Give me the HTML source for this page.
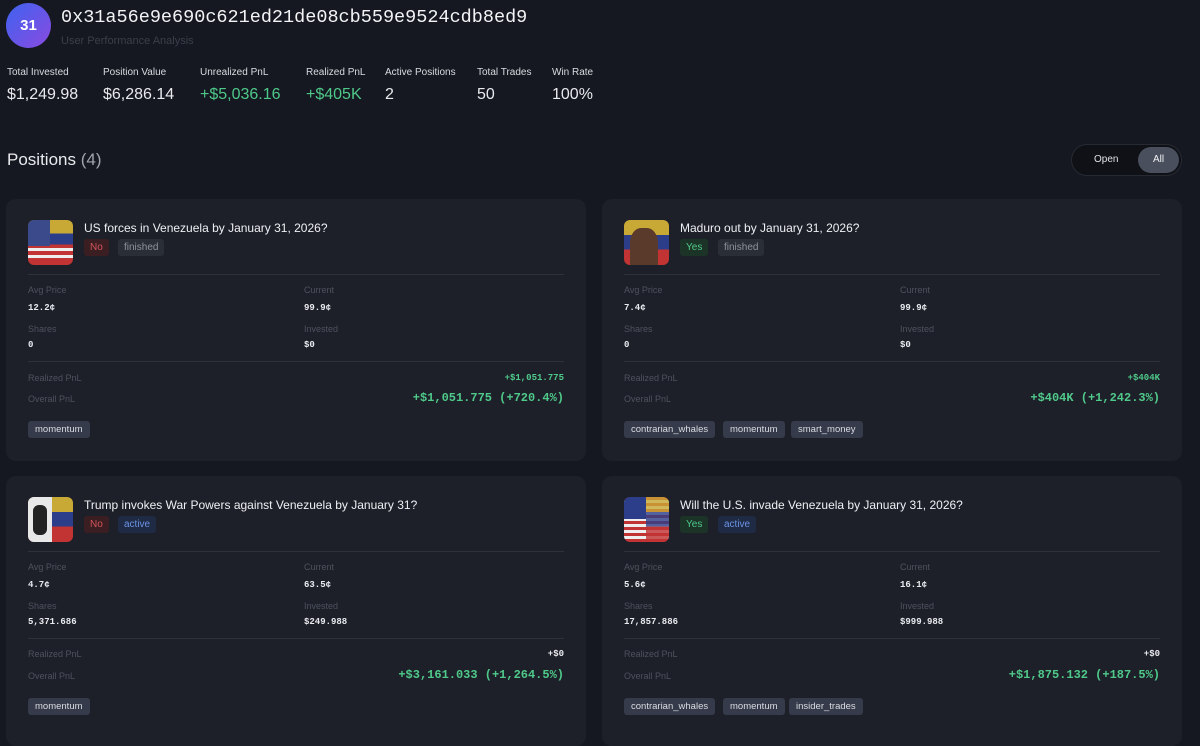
<!DOCTYPE html>
<html><head><style>
*{box-sizing:border-box;margin:0;padding:0}
body{width:1200px;height:733px;overflow:hidden;background:#151820;font-family:"Liberation Sans",sans-serif;color:#e8eaee;position:relative}
.mono{font-family:"Liberation Mono",monospace}
.abs{position:absolute}
.av{left:6px;top:3px;width:45px;height:45px;border-radius:50%;background:linear-gradient(135deg,#3e63f0,#8a4ae0);color:#fff;font-weight:bold;font-size:15px;display:flex;align-items:center;justify-content:center}
.stat .l{font-size:10px;color:#d8dbe0}
.stat .v{font-size:16px;margin-top:8px;color:#e8eaee}
.g{color:#4fc98a!important}
.card{position:absolute;width:580px;height:262px;background:#1d2029;border-radius:10px}
.ic{position:absolute;left:22px;top:21px;width:45px;height:45px;border-radius:6px;overflow:hidden}
.ttl{position:absolute;left:78px;top:22px;font-size:12px;color:#eef0f3}
.bd{position:absolute;top:40px;height:17px;font-size:10px;line-height:17px;padding:0 6px;border-radius:3px}
.sep{position:absolute;left:22px;right:22px;height:1px;background:#2d313b}
.lb{position:absolute;font-size:9px;color:#4d525d}
.vl{position:absolute;font-size:9px;color:#e8eaee;font-family:"Liberation Mono",monospace;font-weight:bold}
.tag{position:absolute;top:222px;height:17px;line-height:17px;font-size:9.5px;padding:0 7px;background:#353b4a;color:#d9dce2;border-radius:3px}
</style></head><body>
<div class="abs av">31</div>
<div class="abs mono" style="left:61px;top:7px;font-size:18.5px;color:#f2f3f5">0x31a56e9e690c621ed21de08cb559e9524cdb8ed9</div>
<div class="abs" style="left:61px;top:35px;font-size:11px;color:#3a3f4a">User Performance Analysis</div>
<div class="abs stat" style="left:7px;top:67px"><div class="l">Total Invested</div><div class="v">$1,249.98</div></div>
<div class="abs stat" style="left:103px;top:67px"><div class="l">Position Value</div><div class="v">$6,286.14</div></div>
<div class="abs stat" style="left:200px;top:67px"><div class="l">Unrealized PnL</div><div class="v g">+$5,036.16</div></div>
<div class="abs stat" style="left:306px;top:67px"><div class="l">Realized PnL</div><div class="v g">+$405K</div></div>
<div class="abs stat" style="left:385px;top:67px"><div class="l">Active Positions</div><div class="v">2</div></div>
<div class="abs stat" style="left:477px;top:67px"><div class="l">Total Trades</div><div class="v">50</div></div>
<div class="abs stat" style="left:552px;top:67px"><div class="l">Win Rate</div><div class="v">100%</div></div>
<div class="abs" style="left:7px;top:150px;font-size:17px;color:#e8eaee">Positions <span style="color:#a0a4ad">(4)</span></div>
<div class="abs" style="left:1071px;top:144px;width:111px;height:32px;border-radius:16px;background:#0f1116;border:1px solid #262a33"></div>
<div class="abs" style="left:1094px;top:147px;height:26px;line-height:26px;font-size:10px;color:#e0e2e6">Open</div>
<div class="abs" style="left:1138px;top:147px;width:41px;height:26px;border-radius:13px;background:#4a4f5e;color:#f0f1f3;font-size:10px;text-align:center;line-height:26px">All</div>

<!-- card 1 -->
<div class="card" style="left:6px;top:199px">
<div class="ic" style="background:linear-gradient(180deg,#c9a935 0 30%,#2c3e8a 30% 55%,#c23333 55%);"><div style="position:absolute;left:0;top:0;width:22px;height:26px;background:#3a4a8a"></div><div style="position:absolute;left:0;top:28px;width:45px;height:3px;background:#eee"></div><div style="position:absolute;left:0;top:35px;width:45px;height:3px;background:#eee"></div></div>
<div class="ttl">US forces in Venezuela by January 31, 2026?</div>
<div class="bd" style="left:78px;background:#3a1e22;color:#d2545a">No</div>
<div class="bd" style="left:112px;background:#2a2e37;color:#8e939c">finished</div>
<div class="sep" style="top:75px"></div>
<div class="lb" style="left:22px;top:86px">Avg Price</div><div class="vl" style="left:22px;top:104px">12.2¢</div>
<div class="lb" style="left:298px;top:86px">Current</div><div class="vl" style="left:298px;top:104px">99.9¢</div>
<div class="lb" style="left:22px;top:125px">Shares</div><div class="vl" style="left:22px;top:141px">0</div>
<div class="lb" style="left:298px;top:125px">Invested</div><div class="vl" style="left:298px;top:141px">$0</div>
<div class="sep" style="top:162px"></div>
<div class="lb" style="left:22px;top:174px">Realized PnL</div><div class="vl g" style="right:22px;top:174px">+$1,051.775</div>
<div class="lb" style="left:22px;top:195px">Overall PnL</div><div class="vl g" style="right:22px;top:192px;font-size:12px">+$1,051.775 (+720.4%)</div>
<div class="tag" style="left:22px">momentum</div>
</div>

<!-- card 2 -->
<div class="card" style="left:602px;top:199px">
<div class="ic" style="background:linear-gradient(180deg,#c9a935 0 33%,#2c3e8a 33% 66%,#c23333 66%);"><div style="position:absolute;left:6px;top:8px;width:28px;height:37px;border-radius:40% 40% 0 0;background:#5a3a2a"></div></div>
<div class="ttl">Maduro out by January 31, 2026?</div>
<div class="bd" style="left:78px;background:#1c3327;color:#4fc98a">Yes</div>
<div class="bd" style="left:116px;background:#2a2e37;color:#8e939c">finished</div>
<div class="sep" style="top:75px"></div>
<div class="lb" style="left:22px;top:86px">Avg Price</div><div class="vl" style="left:22px;top:104px">7.4¢</div>
<div class="lb" style="left:298px;top:86px">Current</div><div class="vl" style="left:298px;top:104px">99.9¢</div>
<div class="lb" style="left:22px;top:125px">Shares</div><div class="vl" style="left:22px;top:141px">0</div>
<div class="lb" style="left:298px;top:125px">Invested</div><div class="vl" style="left:298px;top:141px">$0</div>
<div class="sep" style="top:162px"></div>
<div class="lb" style="left:22px;top:174px">Realized PnL</div><div class="vl g" style="right:22px;top:174px">+$404K</div>
<div class="lb" style="left:22px;top:195px">Overall PnL</div><div class="vl g" style="right:22px;top:192px;font-size:12px">+$404K (+1,242.3%)</div>
<div class="tag" style="left:22px">contrarian_whales</div>
<div class="tag" style="left:121px">momentum</div>
<div class="tag" style="left:189px">smart_money</div>
</div>

<!-- card 3 -->
<div class="card" style="left:6px;top:476px;height:270px">
<div class="ic" style="background:linear-gradient(180deg,#c9a935 0 33%,#2c3e8a 33% 66%,#c23333 66%);"><div style="position:absolute;left:0;top:0;width:24px;height:45px;background:#e8e8e8"></div><div style="position:absolute;left:5px;top:8px;width:14px;height:30px;border-radius:6px;background:#222"></div></div>
<div class="ttl">Trump invokes War Powers against Venezuela by January 31?</div>
<div class="bd" style="left:78px;background:#3a1e22;color:#d2545a">No</div>
<div class="bd" style="left:112px;background:#1f2a45;color:#6b93e6">active</div>
<div class="sep" style="top:75px"></div>
<div class="lb" style="left:22px;top:86px">Avg Price</div><div class="vl" style="left:22px;top:104px">4.7¢</div>
<div class="lb" style="left:298px;top:86px">Current</div><div class="vl" style="left:298px;top:104px">63.5¢</div>
<div class="lb" style="left:22px;top:125px">Shares</div><div class="vl" style="left:22px;top:141px">5,371.686</div>
<div class="lb" style="left:298px;top:125px">Invested</div><div class="vl" style="left:298px;top:141px">$249.988</div>
<div class="sep" style="top:162px"></div>
<div class="lb" style="left:22px;top:173px">Realized PnL</div><div class="vl" style="right:22px;top:173px">+$0</div>
<div class="lb" style="left:22px;top:195px">Overall PnL</div><div class="vl g" style="right:22px;top:192px;font-size:12px">+$3,161.033 (+1,264.5%)</div>
<div class="tag" style="left:22px">momentum</div>
</div>

<!-- card 4 -->
<div class="card" style="left:602px;top:476px;height:270px">
<div class="ic" style="background:repeating-linear-gradient(180deg,#c23333 0 3px,#eee 3px 6px);"><div style="position:absolute;left:0;top:0;width:22px;height:22px;background:#2c3e8a"></div><div style="position:absolute;left:22px;top:0;width:23px;height:45px;background:linear-gradient(180deg,#c9a935 0 33%,#2c3e8a 33% 66%,#c23333 66%);opacity:.8"></div></div>
<div class="ttl">Will the U.S. invade Venezuela by January 31, 2026?</div>
<div class="bd" style="left:78px;background:#1c3327;color:#4fc98a">Yes</div>
<div class="bd" style="left:116px;background:#1f2a45;color:#6b93e6">active</div>
<div class="sep" style="top:75px"></div>
<div class="lb" style="left:22px;top:86px">Avg Price</div><div class="vl" style="left:22px;top:104px">5.6¢</div>
<div class="lb" style="left:298px;top:86px">Current</div><div class="vl" style="left:298px;top:104px">16.1¢</div>
<div class="lb" style="left:22px;top:125px">Shares</div><div class="vl" style="left:22px;top:141px">17,857.886</div>
<div class="lb" style="left:298px;top:125px">Invested</div><div class="vl" style="left:298px;top:141px">$999.988</div>
<div class="sep" style="top:162px"></div>
<div class="lb" style="left:22px;top:173px">Realized PnL</div><div class="vl" style="right:22px;top:173px">+$0</div>
<div class="lb" style="left:22px;top:195px">Overall PnL</div><div class="vl g" style="right:22px;top:192px;font-size:12px">+$1,875.132 (+187.5%)</div>
<div class="tag" style="left:22px">contrarian_whales</div>
<div class="tag" style="left:121px">momentum</div>
<div class="tag" style="left:187px">insider_trades</div>
</div>
</body></html>
